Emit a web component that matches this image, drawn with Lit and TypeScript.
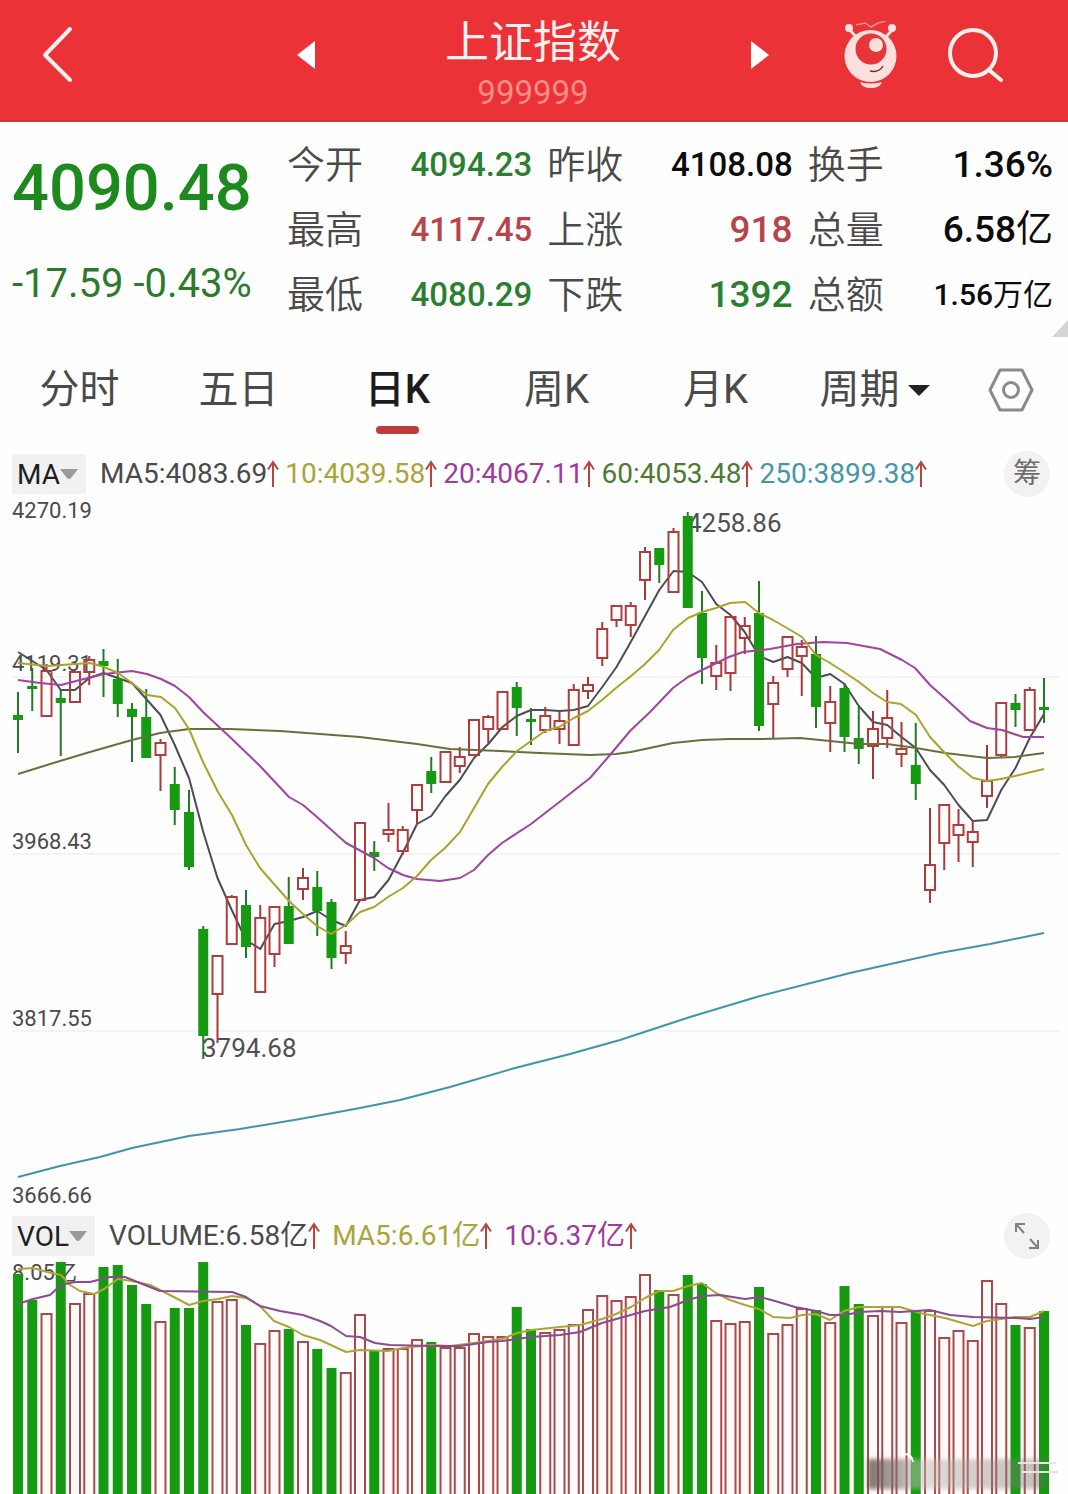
import { LitElement, html, svg, css } from "lit";
import { customElement, property, state } from "lit/decorators.js";
import { classMap } from "lit/directives/class-map.js";

type Point = [number, number];
// direction (1 = up), high, body top, body bottom, low, volume bar top
type Candle = [number, number, number, number, number, number];

const FIRST_X = 18;
const STEP = 14.25;
const PRICE_TOP = 498;
const PRICE_HEIGHT = 714;
const VOLUME_TOP = 1260;
const VOLUME_HEIGHT = 234;

const CANDLES: Candle[] = [
  [0, 692, 715, 720, 753, 1274], [0, 668, 686, 689, 711, 1300], [1, 664, 671, 716, 716, 1314],
  [0, 690, 698, 703, 756, 1262], [1, 672, 672, 702, 702, 1304], [1, 656, 660, 672, 685, 1294],
  [0, 649, 661, 666, 697, 1267], [0, 659, 679, 704, 717, 1265], [0, 703, 709, 717, 762, 1285],
  [0, 689, 717, 758, 758, 1304], [1, 739, 743, 755, 791, 1322], [0, 767, 784, 810, 825, 1308],
  [0, 790, 812, 867, 870, 1308], [0, 926, 929, 1036, 1059, 1262], [1, 956, 956, 994, 1043, 1302],
  [1, 895, 897, 944, 944, 1300], [0, 890, 905, 947, 958, 1325], [1, 905, 918, 992, 992, 1344],
  [1, 907, 907, 954, 967, 1331], [0, 877, 906, 944, 944, 1329], [1, 868, 878, 889, 900, 1342],
  [0, 871, 887, 911, 936, 1349], [0, 899, 902, 958, 969, 1368], [1, 931, 946, 953, 964, 1373],
  [1, 823, 823, 900, 900, 1315], [0, 841, 852, 857, 871, 1351], [1, 803, 830, 834, 842, 1349],
  [1, 826, 830, 851, 855, 1349], [1, 785, 785, 810, 825, 1340], [0, 757, 771, 784, 793, 1342],
  [1, 752, 752, 782, 782, 1348], [1, 747, 757, 766, 773, 1348], [1, 720, 720, 755, 755, 1334],
  [1, 715, 717, 729, 743, 1337], [1, 692, 692, 729, 729, 1337], [0, 682, 687, 708, 736, 1307],
  [0, 708, 719, 722, 745, 1329], [1, 707, 716, 730, 733, 1333], [1, 711, 721, 729, 744, 1330],
  [1, 684, 690, 745, 745, 1325], [1, 677, 685, 691, 699, 1310], [1, 622, 629, 658, 666, 1296],
  [1, 606, 606, 620, 627, 1301], [1, 602, 606, 625, 637, 1297], [1, 547, 552, 580, 600, 1275],
  [0, 548, 548, 565, 583, 1290], [1, 528, 532, 592, 592, 1295], [0, 512, 516, 608, 608, 1275],
  [0, 591, 613, 658, 684, 1284], [1, 645, 663, 676, 690, 1321], [1, 617, 617, 673, 691, 1324],
  [1, 617, 626, 638, 654, 1322], [0, 581, 613, 726, 731, 1287], [1, 676, 683, 704, 739, 1334],
  [1, 637, 637, 669, 677, 1325], [1, 640, 647, 656, 696, 1309], [0, 636, 654, 707, 728, 1310],
  [1, 686, 702, 723, 752, 1323], [0, 683, 688, 737, 752, 1286], [0, 707, 738, 749, 764, 1304],
  [1, 711, 729, 746, 779, 1316], [1, 690, 718, 738, 748, 1307], [1, 722, 749, 754, 767, 1323],
  [0, 723, 765, 784, 800, 1311], [1, 808, 865, 890, 903, 1311], [1, 805, 805, 843, 870, 1338],
  [1, 809, 825, 835, 862, 1331], [1, 820, 832, 842, 867, 1341], [1, 745, 781, 796, 808, 1281],
  [1, 703, 703, 755, 758, 1304], [0, 694, 703, 710, 727, 1325], [1, 687, 690, 730, 730, 1328],
  [0, 678, 707, 710, 723, 1311],
];

// One value per candle
const MA5 = [
  652, 661, 670, 690, 690, 678, 673, 678, 683, 699, 715, 745, 778, 832, 878, 910, 940, 949, 924, 921,
  917, 911, 920, 926, 900, 897, 880, 853, 824, 816, 796, 780, 758, 744, 727, 716, 710, 710, 711, 710,
  706, 687, 667, 642, 616, 590, 571, 572, 582, 604, 615, 632, 656, 662, 657, 663, 678, 674, 684, 706,
  722, 725, 737, 748, 770, 785, 805, 821, 820, 790, 768, 738, 714,
].map((y, i): Point => [FIRST_X + i * STEP, y]);

const MA10: Point[] = [
  [18, 663], [47, 666], [90, 663], [104, 667], [118, 673], [132, 683], [147, 695], [161, 697],
  [175, 708], [189, 729], [203, 762], [218, 792], [232, 815], [246, 845], [260, 868], [274, 884],
  [289, 901], [303, 914], [317, 926], [331, 934], [346, 925], [360, 912], [374, 907], [388, 897],
  [403, 888], [417, 876], [431, 860], [445, 848], [460, 832], [474, 808], [488, 784], [502, 767],
  [517, 751], [531, 741], [545, 731], [559, 727], [574, 718], [588, 711], [602, 700], [616, 688],
  [631, 676], [645, 664], [659, 650], [673, 630], [688, 618], [702, 612], [716, 608], [730, 603],
  [745, 602], [759, 613], [773, 620], [787, 628], [802, 637], [816, 655], [830, 663], [844, 672],
  [859, 682], [873, 693], [887, 702], [901, 704], [916, 715], [930, 737], [944, 752], [958, 766],
  [973, 778], [987, 781], [1001, 779], [1015, 776], [1044, 769],
];

const MA20: Point[] = [
  [18, 680], [40, 683], [61, 685], [80, 680], [104, 674], [132, 671], [147, 674], [161, 679],
  [175, 686], [189, 697], [203, 712], [232, 739], [260, 766], [289, 797], [303, 805], [317, 817],
  [346, 843], [374, 858], [388, 868], [403, 875], [417, 879], [440, 881], [460, 878], [474, 870],
  [488, 855], [502, 843], [531, 824], [562, 800], [590, 778], [610, 755], [630, 731], [650, 712],
  [673, 688], [688, 677], [702, 670], [729, 657], [743, 652], [770, 649], [797, 644], [823, 642],
  [847, 643], [880, 649], [902, 660], [915, 668], [930, 685], [948, 701], [970, 721], [987, 728],
  [1002, 730], [1023, 737], [1044, 737],
];

const MA60: Point[] = [
  [18, 774], [60, 761], [90, 752], [132, 740], [160, 733], [189, 729], [230, 729], [280, 731],
  [320, 734], [360, 737], [417, 744], [450, 749], [500, 751], [540, 753], [590, 755], [616, 754],
  [631, 752], [673, 743], [702, 740], [729, 739], [760, 739], [800, 738], [830, 741], [859, 744],
  [887, 744], [916, 748], [945, 753], [987, 758], [1015, 757], [1044, 753],
];

const MA250: Point[] = [
  [18, 1177], [60, 1166], [100, 1157], [132, 1148], [189, 1136], [240, 1129], [300, 1119],
  [360, 1108], [400, 1100], [450, 1087], [515, 1068], [570, 1054], [620, 1040], [690, 1017],
  [760, 996], [850, 973], [940, 953], [990, 944], [1044, 933],
];

const VOL_MA5: Point[] = [
  [18, 1269], [33, 1268], [47, 1272], [61, 1275], [70, 1285], [80, 1291], [94, 1294], [104, 1289],
  [118, 1279], [132, 1281], [150, 1285], [170, 1295], [189, 1305], [203, 1301], [218, 1299],
  [232, 1296], [246, 1298], [260, 1306], [274, 1321], [289, 1327], [303, 1335], [320, 1340],
  [346, 1352], [360, 1350], [388, 1351], [403, 1348], [431, 1345], [450, 1346], [474, 1343],
  [502, 1339], [517, 1333], [531, 1330], [560, 1327], [580, 1325], [602, 1319], [616, 1314],
  [631, 1307], [645, 1298], [659, 1291], [673, 1291], [688, 1286], [702, 1283], [716, 1293],
  [730, 1300], [745, 1305], [759, 1309], [773, 1317], [790, 1318], [802, 1315], [816, 1314],
  [830, 1320], [844, 1311], [859, 1307], [900, 1307], [920, 1313], [945, 1318], [973, 1326],
  [987, 1321], [1001, 1319], [1015, 1317], [1030, 1317], [1044, 1311],
];

const VOL_MA10: Point[] = [
  [18, 1304], [33, 1299], [50, 1295], [61, 1285], [75, 1282], [90, 1282], [110, 1277], [125, 1277],
  [140, 1283], [160, 1291], [232, 1292], [246, 1297], [260, 1306], [280, 1311], [303, 1315],
  [320, 1321], [331, 1326], [346, 1336], [360, 1337], [375, 1343], [390, 1345], [431, 1346],
  [460, 1346], [488, 1342], [502, 1341], [531, 1337], [560, 1335], [580, 1332], [602, 1323],
  [645, 1311], [670, 1307], [688, 1300], [702, 1296], [720, 1295], [745, 1299], [760, 1297],
  [775, 1301], [795, 1307], [816, 1311], [830, 1315], [845, 1315], [860, 1312], [880, 1311],
  [900, 1312], [930, 1310], [950, 1315], [973, 1317], [1015, 1318], [1030, 1319], [1044, 1317],
];

const STATS: { label: string; value: string; unit?: string; tone: string; size: string }[] = [
  { label: "今开", value: "4094.23", tone: "down", size: "md" },
  { label: "昨收", value: "4108.08", tone: "flat", size: "md" },
  { label: "换手", value: "1.36%", tone: "flat", size: "lg" },
  { label: "最高", value: "4117.45", tone: "up", size: "md" },
  { label: "上涨", value: "918", tone: "up", size: "lg" },
  { label: "总量", value: "6.58", unit: "亿", tone: "flat", size: "lg" },
  { label: "最低", value: "4080.29", tone: "down", size: "md" },
  { label: "下跌", value: "1392", tone: "down", size: "lg" },
  { label: "总额", value: "1.56", unit: "万亿", tone: "flat", size: "sm" },
];

const line = (points: Point[], cls: string) =>
  svg`<polyline class=${cls} points=${points.map((p) => p.join(",")).join(" ")} />`;

@customElement("price-chart")
class PriceChart extends LitElement {
  static styles = css`
    :host { display: block; }
    .canvas { display: block; width: 100%; height: auto; }
    .grid { stroke: #e9e9ec; stroke-width: 1; }
    .axis { font: 400 22px Roboto, sans-serif; fill: #4a4a4a; }
    .mark { font: 400 26px Roboto, sans-serif; fill: #505052; }
    .up-body { fill: none; stroke: #b03c3c; stroke-width: 2; }
    .up-wick { stroke: #a83838; stroke-width: 2; }
    .down-body { fill: #159a12; }
    .down-wick { stroke: #247a24; stroke-width: 2; }
    polyline { fill: none; stroke-width: 2; stroke-linejoin: round; }
    .ma5 { stroke: #4c4c56; }
    .ma10 { stroke: #aaa32c; }
    .ma20 { stroke: #a044a0; }
    .ma60 { stroke: #66703c; }
    .ma250 { stroke: #3f95ac; }
  `;

  private candle([up, high, top, bottom, low]: Candle, i: number) {
    const x = FIRST_X + i * STEP;
    return up
      ? svg`
          <line class="up-wick" x1=${x} x2=${x} y1=${high} y2=${top} />
          <line class="up-wick" x1=${x} x2=${x} y1=${bottom} y2=${low} />
          <rect class="up-body" x=${x - 5} y=${top} width="10" height=${bottom - top} />`
      : svg`
          <line class="down-wick" x1=${x} x2=${x} y1=${high} y2=${low} />
          <rect class="down-body" x=${x - 5} y=${top} width="10" height=${bottom - top} />`;
  }

  render() {
    return html`
      <svg class="canvas" viewBox="0 ${PRICE_TOP} 1068 ${PRICE_HEIGHT}" role="img" aria-label="日K">
        ${[677, 854, 1031].map((y) => svg`<line class="grid" x1="12" x2="1060" y1=${y} y2=${y} />`)}
        <text class="axis" x="12" y="518">4270.19</text>
        <text class="axis" x="12" y="671">4119.31</text>
        <text class="axis" x="12" y="849">3968.43</text>
        <text class="axis" x="12" y="1026">3817.55</text>
        <text class="axis" x="12" y="1203">3666.66</text>
        <text class="mark" x="687" y="532">4258.86</text>
        <text class="mark" x="202" y="1057">3794.68</text>
        ${line(MA5, "ma5")} ${CANDLES.map((c, i) => this.candle(c, i))}
        ${line(MA60, "ma60")} ${line(MA20, "ma20")} ${line(MA10, "ma10")} ${line(MA250, "ma250")}
      </svg>
    `;
  }
}

@customElement("volume-chart")
class VolumeChart extends LitElement {
  static styles = css`
    :host { display: block; }
    .canvas { display: block; width: 100%; height: auto; }
    .axis { font: 400 22px Roboto, "Noto Sans CJK SC", sans-serif; fill: #4a4a4a; }
    .up { fill: #fffafa; stroke: #a84a4a; stroke-width: 2; }
    .down { fill: #159a12; }
    polyline { fill: none; stroke-width: 2; stroke-linejoin: round; }
    .ma5 { stroke: #b0a436; }
    .ma10 { stroke: #8c4a90; }
    .stamp { filter: blur(2px); }
  `;

  render() {
    const bottom = VOLUME_TOP + VOLUME_HEIGHT;
    return html`
      <svg class="canvas" viewBox="0 ${VOLUME_TOP} 1068 ${VOLUME_HEIGHT}" role="img" aria-label="VOL">
        <defs>
          <linearGradient id="shade" x1="0" x2="1" y1="0" y2="0">
            <stop offset="0" stop-color="#5c5048" stop-opacity="0.8" />
            <stop offset="0.2" stop-color="#8a7f78" stop-opacity="0.6" />
            <stop offset="0.26" stop-color="#c8c2be" stop-opacity="0.5" />
            <stop offset="0.6" stop-color="#a09894" stop-opacity="0.45" />
            <stop offset="1" stop-color="#6c6864" stop-opacity="0.4" />
          </linearGradient>
        </defs>
        <text class="axis" x="12" y="1280">8.05亿</text>
        ${CANDLES.map(([up, , , , , top], i) => {
          const x = FIRST_X + i * STEP - 5;
          return svg`<rect class=${up ? "up" : "down"} x=${x} y=${top} width="10" height=${bottom - top + (up ? 4 : 0)} />`;
        })}
        ${line(VOL_MA5, "ma5")} ${line(VOL_MA10, "ma10")}
        <rect class="stamp" x="868" y="1459" width="178" height="30" fill="url(#shade)" />
        <path d="M904 1454q8 0 9 8" fill="none" stroke="#fff" stroke-width="2" />
        <path d="M1018 1463h38M1022 1472h36" fill="none" stroke="#e4e4e4" stroke-width="2" />
      </svg>
    `;
  }
}

@customElement("indicator-value")
class IndicatorValue extends LitElement {
  @property() text = "";

  static styles = css`
    :host { display: flex; align-items: center; line-height: 40px; white-space: nowrap; }
    .arrow { display: block; width: 12px; height: 28px; }
  `;

  render() {
    return html`
      <span>${this.text}</span>
      <svg class="arrow" viewBox="0 0 12 28" fill="none" stroke="#b8443e" stroke-width="2">
        <path d="M6 27V2M1 9.500L6 2l5 7.500" />
      </svg>
    `;
  }
}

@customElement("app-root")
class AppRoot extends LitElement {
  @state() private tab = "日K";

  static styles = css`
    :host {
      display: block;
      background: #fefefe;
      color: #4a4a4a;
      font-family: Roboto, "Noto Sans CJK SC", sans-serif;
    }
    button, select {
      margin: 0;
      padding: 0;
      border: 0;
      background: none;
      color: inherit;
      font: inherit;
      cursor: pointer;
    }
    svg { display: block; }

    .header {
      display: grid;
      grid-template-columns: 116fr 130fr 120fr 334fr 120fr 102fr 108fr 38fr;
      align-items: center;
      height: 122px;
      box-sizing: border-box;
      border-bottom: 2px solid #c8393b;
      background: #ea3237;
      color: #fff0ee;
    }
    .icon-button { display: grid; place-items: center; height: 100%; padding-bottom: 10px; }
    .prev { grid-column: 3; }
    .title { padding-top: 10px; text-align: center; }
    .name { margin: 0; font-size: 44px; font-weight: 400; line-height: 56px; }
    .code { margin: 0; color: #f58d88; font-size: 33px; line-height: 44px; }

    .quote {
      position: relative;
      display: grid;
      grid-template-columns: 287fr 781fr;
      padding: 10px 0;
    }
    .corner { position: absolute; right: 0; bottom: 0; }
    .price { margin: 0; padding: 16px 0 0 12px; color: #1c8a1c; font-size: 65px; font-weight: 500; line-height: 80px; }
    .change { margin: 0; padding: 32px 0 0 12px; color: #2c7a2c; font-size: 40px; line-height: 48px; white-space: nowrap; }
    .stats { display: grid; grid-template-columns: repeat(3, 1fr); margin: 0; }
    .stat {
      display: flex;
      align-items: center;
      justify-content: space-between;
      height: 65px;
      padding-right: 15px;
      line-height: 40px;
      white-space: nowrap;
    }
    .stat dt { font-size: 38px; font-weight: 350; }
    .stat dd { margin: 0; font-weight: 500; }
    .unit { font-weight: 400; }
    .sm { font-size: 30px; }
    .md { font-size: 33px; }
    .lg { font-size: 37px; }
    .up { color: #b8444a; }
    .down { color: #2a8030; }
    .flat { color: #0c0c0c; }

    .tabs {
      display: grid;
      grid-template-columns: repeat(6, 159fr) 114fr;
      height: 104px;
      padding-top: 9px;
      font-size: 40px;
      line-height: 56px;
    }
    .tab {
      display: flex;
      flex-direction: column;
      align-items: center;
      justify-content: center;
      gap: 8px;
      white-space: nowrap;
    }
    .tab::after { content: ""; width: 43px; height: 8px; border-radius: 4px; }
    .tab.active { color: #1c1c1c; font-weight: 500; }
    .tab.active::after { background: #c03c3c; }
    .period { display: flex; align-items: center; justify-content: center; gap: 8px; padding-bottom: 16px; }
    .settings { display: grid; place-items: center; padding-bottom: 16px; }
    select { appearance: none; }

    .indicators {
      display: flex;
      align-items: center;
      gap: 6px;
      height: 48px;
      padding: 0 18px 0 12px;
      font-size: 28px;
    }
    .indicators.wide { gap: 12px; }
    .picker {
      display: flex;
      align-items: center;
      height: 40px;
      margin-right: 8px;
      padding: 0 8px 0 5px;
      background: #f1f1f1;
      color: #1e1e1e;
    }
    .wide .picker { margin-right: 2px; }
    .ma10 { color: #aaa43a; }
    .ma20 { color: #9c3c9c; }
    .ma60 { color: #4f7a34; }
    .ma250 { color: #4496a8; }
    .round {
      display: grid;
      place-items: center;
      width: 46px;
      height: 46px;
      margin-left: auto;
      border-radius: 50%;
      background: #f2f2f2;
      color: #6e6e6e;
      line-height: 40px;
    }
  `;

  private renderTab(name: string) {
    return html`
      <button
        class=${classMap({ tab: true, active: this.tab === name })}
        role="tab"
        aria-selected=${this.tab === name}
        @click=${() => (this.tab = name)}
      ><span>${name}</span></button>
    `;
  }

  private caret(color: string) {
    return html`
      <svg width="18" height="11" viewBox="0 0 18 11" fill=${color}><path d="M0 0h18l-7 9q-2 2-4 0z" /></svg>
    `;
  }

  render() {
    return html`
      <header class="header">
        <button class="icon-button" aria-label="返回">
          <svg width="32" height="58" viewBox="0 0 32 58" fill="none" stroke="currentColor" stroke-width="4" stroke-linecap="round" stroke-linejoin="round"><path d="M28 3L3 29l25 25" /></svg>
        </button>
        <button class="icon-button prev" aria-label="上一个">
          <svg width="18" height="28" viewBox="0 0 18 28" fill="#fff"><path d="M18 0v28L0 14z" /></svg>
        </button>
        <div class="title">
          <h1 class="name">上证指数</h1>
          <p class="code">999999</p>
        </div>
        <button class="icon-button" aria-label="下一个">
          <svg width="18" height="28" viewBox="0 0 18 28" fill="#fff"><path d="M0 0v28l18-14z" /></svg>
        </button>
        <button class="icon-button" aria-label="助手">
          <svg width="56" height="68" viewBox="0 0 56 68" fill="#fde0de">
            <path d="M6 8l8 9M50 8l-8 9" stroke="#fde0de" stroke-width="3" />
            <circle cx="6" cy="7" r="4" />
            <circle cx="49" cy="7" r="4" />
            <path d="M13 4l9-2 6 4 7-4 8-2" fill="none" stroke="#f58d88" stroke-width="1.500" />
            <circle cx="27.500" cy="35" r="26" />
            <circle cx="28" cy="28" r="15.500" fill="#e8353a" />
            <circle cx="33" cy="24" r="7" />
            <path d="M27 50q9 2 13-5" fill="none" stroke="#6a3038" stroke-width="1.500" />
            <path d="M17 61q10 3 22 0-2 6-11 6t-11-6z" />
          </svg>
        </button>
        <button class="icon-button" aria-label="搜索">
          <svg width="58" height="58" viewBox="0 0 58 58" fill="none" stroke="currentColor" stroke-width="4" stroke-linecap="round"><circle cx="26" cy="27" r="23" /><path d="M42 44l12 10" /></svg>
        </button>
      </header>

      <section class="quote">
        <div>
          <p class="price">4090.48</p>
          <p class="change">-17.59 -0.43%</p>
        </div>
        <dl class="stats">
          ${STATS.map((s) => html`
            <div class="stat"><dt>${s.label}</dt><dd class="${s.tone} ${s.size}">${s.value}${s.unit ? html`<span class="unit">${s.unit}</span>` : ""}</dd></div>
          `)}
        </dl>
        <svg class="corner" width="16" height="17" viewBox="0 0 16 17" fill="#d4d4d4"><path d="M16 0v17H0z" /></svg>
      </section>

      <nav class="tabs" role="tablist">
        ${["分时", "五日", "日K", "周K", "月K"].map((t) => this.renderTab(t))}
        <label class="period">
          <select aria-label="周期"><option>周期</option></select>
          <svg width="22" height="12" viewBox="0 0 22 12" fill="#222"><path d="M0 1h22L11 12z" /></svg>
        </label>
        <button class="settings" aria-label="设置">
          <svg width="46" height="44" viewBox="0 0 46 44" fill="none" stroke="#8a8a8a" stroke-width="3" stroke-linejoin="round">
            <path d="M12 2h22l10 20-10 20H12L2 22z" />
            <circle cx="23" cy="22" r="7.500" />
          </svg>
        </button>
      </nav>

      <div class="indicators">
        <label class="picker"><select aria-label="指标"><option>MA</option></select>${this.caret("#9a9a9a")}</label>
        <indicator-value text="MA5:4083.69"></indicator-value>
        <indicator-value class="ma10" text="10:4039.58"></indicator-value>
        <indicator-value class="ma20" text="20:4067.11"></indicator-value>
        <indicator-value class="ma60" text="60:4053.48"></indicator-value>
        <indicator-value class="ma250" text="250:3899.38"></indicator-value>
        <button class="round">筹</button>
      </div>
      <price-chart></price-chart>

      <div class="indicators wide">
        <label class="picker"><select aria-label="副图指标"><option>VOL</option></select>${this.caret("#9a9a9a")}</label>
        <indicator-value text="VOLUME:6.58亿"></indicator-value>
        <indicator-value class="ma10" text="MA5:6.61亿"></indicator-value>
        <indicator-value class="ma20" text="10:6.37亿"></indicator-value>
        <button class="round" aria-label="全屏">
          <svg width="24" height="26" viewBox="0 0 24 26" fill="none" stroke="#808080" stroke-width="2"><path d="M1 9V1h9M1 1l8 9M23 17v8h-9M23 25l-8-9" /></svg>
        </button>
      </div>
      <volume-chart></volume-chart>
    `;
  }
}
